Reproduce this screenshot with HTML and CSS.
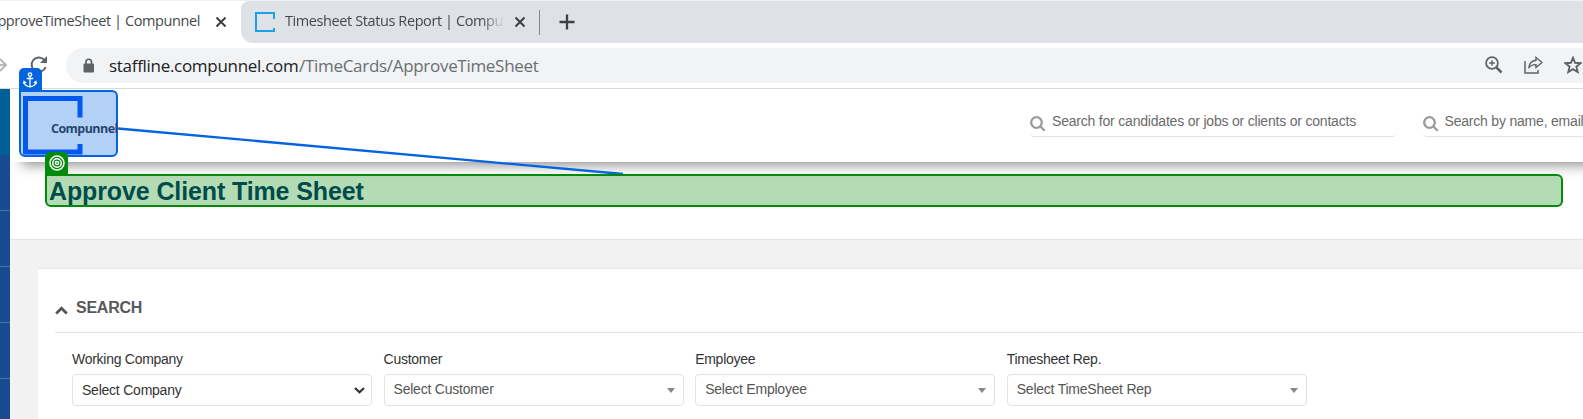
FILE: index.html
```html
<!DOCTYPE html>
<html lang="en">
<head>
<meta charset="utf-8">
<title>ApproveTimeSheet | Compunnel</title>
<link rel="stylesheet" href="styles.css">
</head>
<body>
<div class="screen">
  <div class="tabs">
    <div class="tab tab-active">
      <span class="tab-title title-one">pproveTimeSheet | Compunnel</span>
      <svg class="close" width="12" height="12" viewBox="0 0 12 12"><path d="M1.500 1.500l9 9M10.500 1.500l-9 9"/></svg>
    </div>
    <div class="tab-rest">
      <svg class="favicon" width="20" height="20" viewBox="0 0 20 20"><path d="M19 7V1H1v18h18v-3"/></svg>
      <span class="tab-title title-two">Timesheet Status Report | Compu</span>
      <svg class="close" width="12" height="12" viewBox="0 0 12 12"><path d="M1.500 1.500l9 9M10.500 1.500l-9 9"/></svg>
      <span class="tab-separator"></span>
      <svg class="plus" width="16" height="16" viewBox="0 0 16 16"><path d="M8 .5v15M.5 8h15"/></svg>
    </div>
  </div>
  <div class="toolbar">
    <svg class="forward" width="8" height="16" viewBox="0 0 8 16"><path d="M-4 8H6M0 2l6 6-6 6"/></svg>
    <svg class="reload" width="20" height="20" viewBox="0 0 20 20"><path class="arc" d="M16.600 12A7.200 7.200 0 1 1 15 4.600"/><path class="head" d="M18 1v7h-7z"/></svg>
    <div class="address">
      <svg class="lock" width="12" height="16" viewBox="0 0 12 16"><rect x=".5" y="5.500" width="10.500" height="9" rx="1.300"/><path d="M3 6V4a2.750 2.750 0 0 1 5.500 0v2"/></svg>
      <span class="host">staffline.compunnel.com</span><span class="path">/TimeCards/ApproveTimeSheet</span>
      <div class="actions">
        <svg width="18" height="18" viewBox="0 0 18 18"><circle cx="7" cy="7" r="5.900" stroke-width="1.800"/><path d="M11 11l5.500 5.500" stroke-width="2.500"/><path d="M7 4.200v5.600M4.200 7h5.600" stroke-width="1.400"/></svg>
        <svg width="19" height="18" viewBox="0 0 19 18"><path d="M1 5v12h13v-3" stroke-width="1.500"/><path d="M12 1.500l6 5-6 5V8.600C8.500 8.500 6.300 9.700 4.600 12 5.200 8 7.500 4.800 12 4.300z" stroke-width="1.400"/></svg>
        <svg width="18" height="18" viewBox="0 0 18 18"><path d="M9 1.800l2.100 5 5.400.4-4.100 3.500 1.300 5.300L9 13.200 4.300 16l1.300-5.300-4.100-3.500 5.400-.4z" stroke-width="1.900"/></svg>
      </div>
    </div>
  </div>
  <div class="page">
    <aside class="sidebar">
      <div class="side-brand"></div>
      <div class="side-item"></div>
      <div class="side-item"></div>
      <div class="side-item"></div>
      <div class="side-item"></div>
    </aside>
    <main class="main">
      <header class="header">
        <div class="find find-wide">
          <svg width="16" height="16" viewBox="0 0 16 16"><circle cx="6.500" cy="6.500" r="5.300"/><path d="M10.200 10.200l4.500 4.500"/></svg>
          <span class="find-text">Search for candidates or jobs or clients or contacts</span>
        </div>
        <div class="find find-cut">
          <svg width="16" height="16" viewBox="0 0 16 16"><circle cx="6.500" cy="6.500" r="5.300"/><path d="M10.200 10.200l4.500 4.500"/></svg>
          <span class="find-text">Search by name, email</span>
        </div>
      </header>
      <section class="title-band">
        <h1 class="title">Approve Client Time Sheet</h1>
      </section>
      <section class="content">
        <div class="panel">
          <div class="panel-head">
            <svg width="13" height="9" viewBox="0 0 13 9"><path d="M1.200 7.500l5.300-5.200 5.300 5.200"/></svg>
            <h2>SEARCH</h2>
          </div>
          <div class="fields">
            <div class="field"><label>Working Company</label><div class="select native"><span>Select Company</span><svg width="11" height="7" viewBox="0 0 11 7"><path d="M1 1l4.500 4.200L10 1"/></svg></div></div>
            <div class="field"><label>Customer</label><div class="select"><span>Select Customer</span><i class="caret"></i></div></div>
            <div class="field"><label>Employee</label><div class="select"><span>Select Employee</span><i class="caret"></i></div></div>
            <div class="field"><label>Timesheet Rep.</label><div class="select"><span>Select TimeSheet Rep</span><i class="caret"></i></div></div>
          </div>
        </div>
      </section>
    </main>
  </div>

  <svg class="link-line" width="520" height="60" viewBox="0 0 520 60"><path d="M8 8.500L513 54"/></svg>
  <div class="anchor-badge"><svg width="14" height="16" viewBox="0 0 14 16"><circle cx="7" cy="2.500" r="1.700"/><path d="M7 4.200V15M3.800 6.500h6.400M1 9.500c.3 3.300 2.700 5 6 5.300 3.300-.3 5.700-2 6-5.300M.6 12l.4-2.500 2.200 1.300M13.400 12L13 9.500l-2.200 1.300"/></svg></div>
  <div class="anchor-box">
    <svg width="60" height="59" viewBox="0 0 60 59"><path d="M57 21.500V2.500H2.500V56H57V48"/></svg>
    <span>Compunnel</span>
  </div>
  <div class="target-badge"><svg width="16" height="16" viewBox="0 0 16 16"><circle cx="8" cy="8" r="7"/><circle cx="8" cy="8" r="4.300"/><circle cx="8" cy="8" r="1.600"/></svg></div>
  <div class="target-box"></div>
</div>
</body>
</html>
```

FILE: styles.css
```css
* { box-sizing: border-box; }
body { margin: 0; background: #fff; font-family: "Liberation Sans", Arial, sans-serif; }
svg { display: block; flex: none; fill: none; }
.screen { position: relative; width: 1583px; height: 419px; overflow: hidden; }

.tabs { display: flex; height: 43px; background: #fff; border-top: 1px solid #f1f2f4; }
.tab { display: flex; align-items: center; justify-content: flex-end; width: 241px; padding-right: 14px; }
.tab-title { flex: none; white-space: nowrap; font-family: "Open Sans", "Noto Sans", sans-serif; font-size: 14.500px; line-height: 20px; letter-spacing: -0.4px; color: #45494d; margin-bottom: 2px; }
.title-one { margin-right: 15px; }
.tab-rest { display: flex; align-items: center; flex: 1; padding-left: 14px; background: #dee1e6; border-bottom-left-radius: 12px; border-top-left-radius: 8px; }
.favicon { stroke: #1da1e6; stroke-width: 2; }
.title-two { width: 219px; margin: 0 10px 2px 10px; -webkit-mask-image: linear-gradient(90deg, #000 90%, transparent); mask-image: linear-gradient(90deg, #000 90%, transparent); }
.close { stroke: #3c4043; stroke-width: 2; }
.tab-separator { width: 1px; height: 25px; margin: 0 19px 0 13px; background: #85888c; }
.plus { stroke: #3c4043; stroke-width: 2.300; }

.toolbar { display: flex; align-items: center; height: 46px; border-bottom: 1px solid #d8dadc; }
.forward { margin-bottom: 2px; stroke: #b5b7ba; stroke-width: 2; }
.reload { margin: 0 18px 2px 21px; }
.reload .arc { stroke: #5f6368; stroke-width: 2; }
.reload .head { fill: #5f6368; }
.address { display: flex; align-items: center; flex: 1; height: 35px; margin-left: -1px; padding: 0 0 1px 17px; border-radius: 18px 0 0 18px; background: #f1f3f4; font-family: "Open Sans", "Noto Sans", sans-serif; font-size: 17px; white-space: nowrap; }
.lock { margin: 2px 14px 0 0; }
.lock rect { fill: #5f6368; }
.lock path { stroke: #5f6368; stroke-width: 1.700; }
.host { width: 190px; color: #202124; letter-spacing: -0.3px; }
.path { color: #6a6e72; letter-spacing: -0.3px; }
.actions { display: flex; gap: 21px; margin-left: auto; margin-right: 1px; stroke: #5f6368; }

.page { display: flex; height: 330px; }
.sidebar { flex: none; width: 10px; background: #174a8f; }
.side-brand { height: 66px; background: #006096; }
.side-item { height: 56px; border-bottom: 1px solid #4a72a8; }
.main { flex: 1; display: flex; flex-direction: column; min-width: 0; }
.header { flex: none; display: flex; height: 73px; padding: 23px 0 0 1020px; position: relative; background: #fff; box-shadow: 12px 3px 12px rgba(0,0,0,.45); clip-path: inset(0 0 -24px 0); }
.find { display: flex; flex: none; height: 25px; border-bottom: 1px solid #e2e3e4; border-radius: 4px; }
.find svg { margin: 4px 6px 0 0; stroke: #9b9b9b; stroke-width: 2.300; }
.find-wide { width: 366px; margin-right: 26.500px; }
.find-cut { width: 180px; }
.find-text { font-size: 14px; line-height: 19px; letter-spacing: -0.2px; color: #6b6b6b; white-space: nowrap; }

.title-band { flex: none; height: 77px; padding: 13px 20px 0 36px; }
.title { margin: 0; padding-left: 3px; font-size: 25px; line-height: 32px; letter-spacing: -0.12px; color: #003268; }
.content { flex: 1; padding: 28px 0 0 28px; background: #f2f2f2; border-top: 1px solid #e4e4e4; }
.panel { height: 160px; padding: 19px 0 0 17px; background: #fff; border-top: 1px solid #e8e8e8; }
.panel-head { display: flex; align-items: flex-start; height: 45px; padding-top: 10px; border-bottom: 1px solid #e5e5e5; }
.panel-head svg { margin: 8px 8px 0 0; stroke: #555; stroke-width: 2.800; }
.panel-head h2 { margin: 0; font-size: 16px; line-height: 20px; letter-spacing: -0.25px; color: #58595b; }
.fields { display: flex; gap: 11.400px; padding: 17px 0 0 17px; }
.field { flex: none; width: 300.200px; }
.field label { display: block; margin-bottom: 5px; font-size: 14px; line-height: 19px; letter-spacing: -0.27px; color: #333; }
.select { display: flex; align-items: center; justify-content: space-between; height: 32px; padding: 0 8px 2px 9px; border: 1px solid #e3e3e3; border-radius: 4px; font-size: 14px; letter-spacing: -0.23px; color: #555; white-space: nowrap; }
.native { padding: 0 6px 0 9px; color: #333; }
.native svg { stroke: #333; stroke-width: 2.200; }
.caret { border: 4px solid transparent; border-top: 5px solid #888; border-bottom: 0; margin-top: 2px; }

/* Annotations drawn over the page */
.link-line { position: absolute; left: 110px; top: 120px; stroke: #0364e0; stroke-width: 2.300; }
.anchor-badge { position: absolute; left: 19px; top: 68px; width: 23px; height: 24px; padding: 4px 0 0 4px; background: #0364e0; border-radius: 5px 5px 0 0; }
.anchor-badge svg { stroke: #fff; stroke-width: 1.300; }
.anchor-box { position: absolute; left: 19px; top: 90px; width: 99px; height: 67px; padding: 4px 0 0 2px; border: 2px solid #0364e0; border-radius: 0 6px 6px 6px; background: #b3d0f6; }
.anchor-box svg { stroke: #0058ee; stroke-width: 5; }
.anchor-box span { position: absolute; left: 30px; top: 29px; font: bold 12.500px/16px "Open Sans", sans-serif; letter-spacing: -0.550px; color: #26466f; }
.target-badge { position: absolute; left: 45px; top: 152px; width: 23px; height: 24px; padding: 3px 0 0 4px; background: #038a0a; border-radius: 5px 5px 0 0; }
.target-badge svg { stroke: #fff; stroke-width: 1.500; }
.target-box { position: absolute; left: 45px; top: 174px; width: 1518px; height: 33px; border: 2px solid #038a0a; border-radius: 0 6px 6px 6px; background: rgba(3,138,10,.3); }
```
